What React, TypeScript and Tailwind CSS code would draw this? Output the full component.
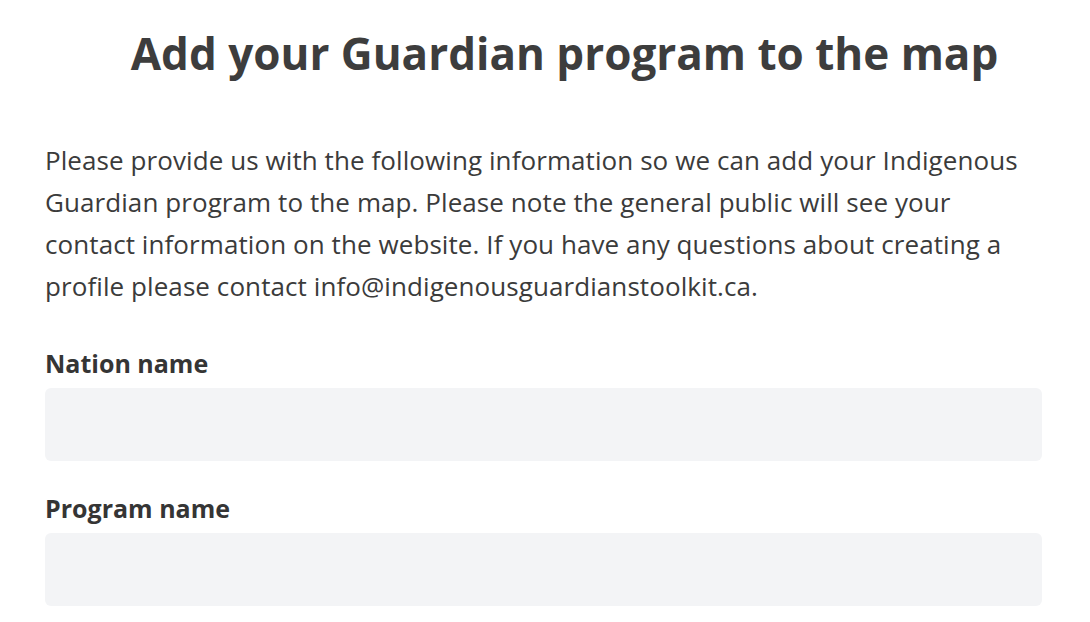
export default function App() {
  const fields = ["Nation name", "Program name"];
  return (
    <div
      className="min-h-screen bg-white pl-[45px] pr-[48px] text-[#3b3b3b]"
      style={{ fontFamily: "'Open Sans', Lato, sans-serif" }}
    >
      <h1 className="pt-[21px] pl-[42px] text-center text-[44px] font-bold leading-[64px] text-[#3d3d3d]">
        Add your Guardian program to the map
      </h1>
      <p className="mt-[54px] text-[26px] leading-[42px] tracking-[0.08px]">
        Please provide us with the following information so we can add your Indigenous
        Guardian program to the map. Please note the general public will see your
        contact information on the website. If you have any questions about creating a
        profile please contact info@indigenousguardianstoolkit.ca.
      </p>
      <form className="mt-[40px] flex flex-col gap-[31px]">
        {fields.map((f) => (
          <label key={f} className="flex flex-col gap-[9px]">
            <span className="text-[25px] font-bold leading-[32px] text-[#353535]">{f}</span>
            <input className="h-[73px] w-full rounded-md bg-[#f3f4f6] outline-none" />
          </label>
        ))}
      </form>
    </div>
  );
}
